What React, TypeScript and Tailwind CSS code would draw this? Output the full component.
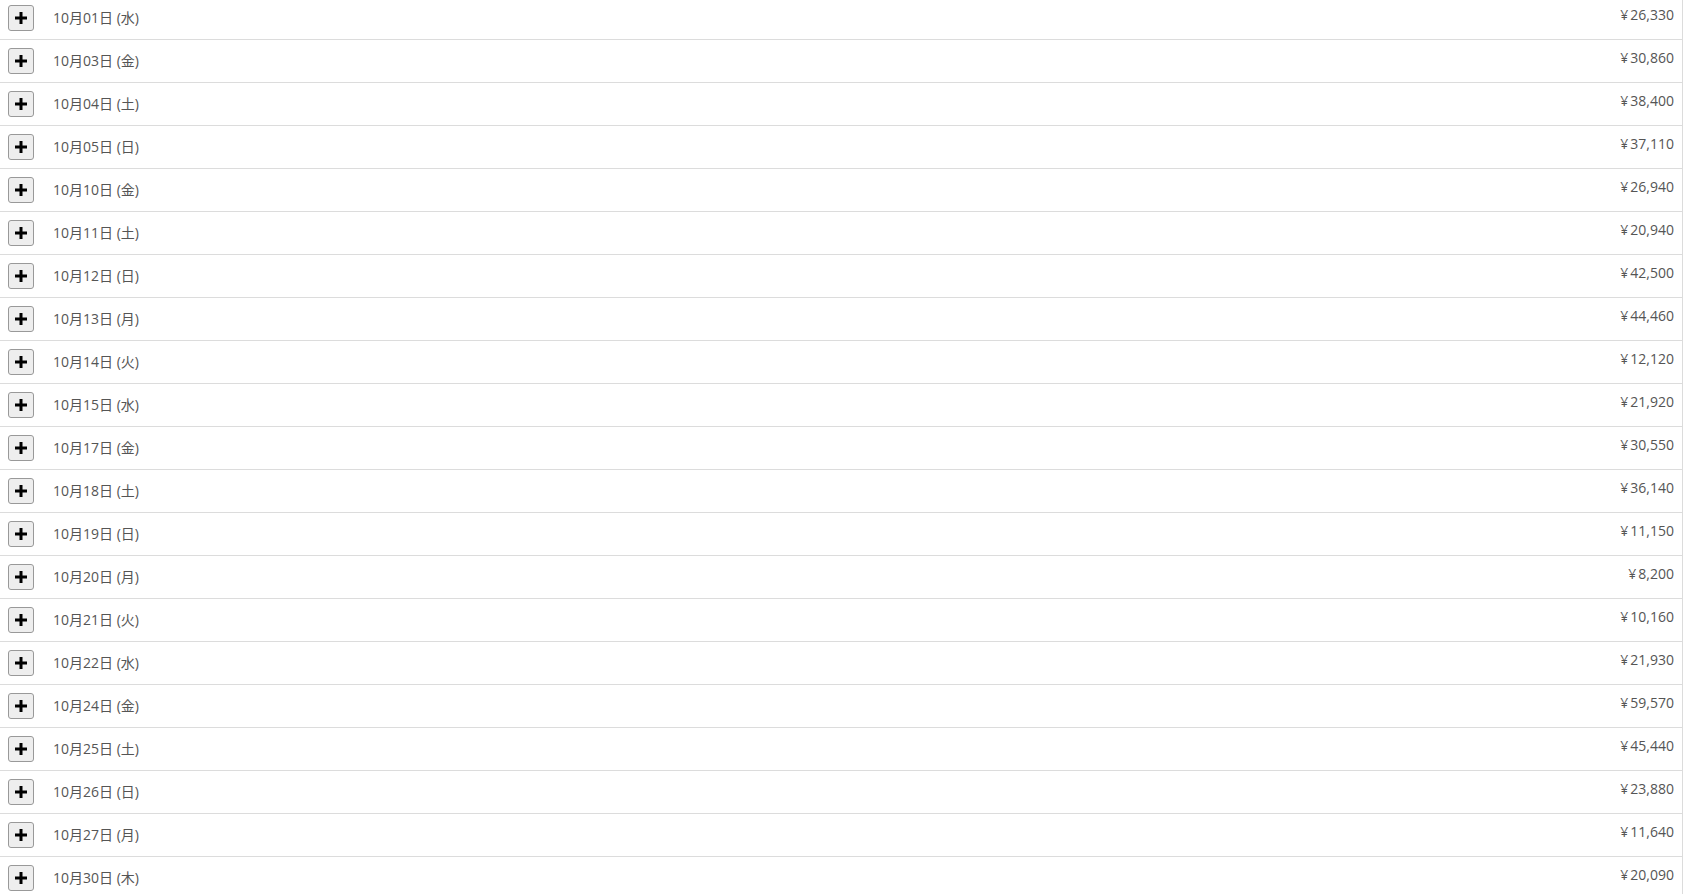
import React from "react";

const rows: [string, string, string][] = [
  ["10月01日", "水", "26,330"],
  ["10月03日", "金", "30,860"],
  ["10月04日", "土", "38,400"],
  ["10月05日", "日", "37,110"],
  ["10月10日", "金", "26,940"],
  ["10月11日", "土", "20,940"],
  ["10月12日", "日", "42,500"],
  ["10月13日", "月", "44,460"],
  ["10月14日", "火", "12,120"],
  ["10月15日", "水", "21,920"],
  ["10月17日", "金", "30,550"],
  ["10月18日", "土", "36,140"],
  ["10月19日", "日", "11,150"],
  ["10月20日", "月", "8,200"],
  ["10月21日", "火", "10,160"],
  ["10月22日", "水", "21,930"],
  ["10月24日", "金", "59,570"],
  ["10月25日", "土", "45,440"],
  ["10月26日", "日", "23,880"],
  ["10月27日", "月", "11,640"],
  ["10月30日", "木", "20,090"],
];

function Plus() {
  return (
    <svg width="12" height="12" viewBox="0 0 12 12">
      <rect x="4.5" y="0" width="3" height="12" fill="#000" />
      <rect x="0" y="4.5" width="12" height="3" fill="#000" />
    </svg>
  );
}

export default function App() {
  return (
    <div className="h-[894px] overflow-hidden bg-white">
      <div
        className="-mt-[3px] w-[1683px] border-r border-[#dcdcdc] text-[#555]"
        style={{ fontFamily: '"Open Sans", "Noto Sans CJK JP", sans-serif' }}
      >
        {rows.map(([d, w, a]) => (
          <div
            key={d}
            className="flex h-[43px] items-center border-b border-[#dcdcdc]"
          >
            <button className="ml-[8px] flex h-[26px] w-[26px] items-center justify-center rounded-[3px] border border-[#999] bg-[#eeeeee]">
              <Plus />
            </button>
            <div className="ml-[19px] text-[14px] leading-[18px]">
              {d} ({w})
            </div>
            <div className="ml-auto mr-[8px] flex self-start pt-[9px] text-[14px] leading-[18px]">
              <span className="mr-[2px]">¥</span>
              <span>{a}</span>
            </div>
          </div>
        ))}
      </div>
    </div>
  );
}
